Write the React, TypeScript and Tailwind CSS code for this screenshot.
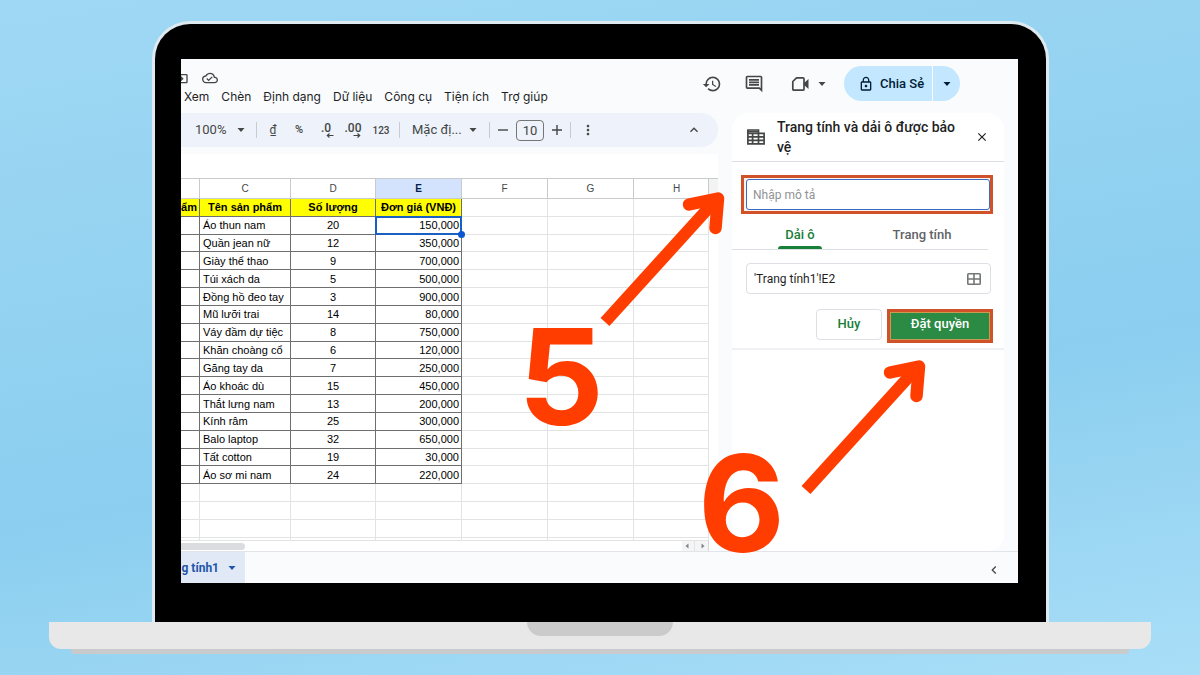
import type { ReactNode } from "react";
import {
  MdChevronLeft,
  MdClose,
  MdExpandLess,
  MdHistory,
  MdLockOutline,
  MdMoreVert,
  MdOutlineCloudDone,
  MdOutlineDriveFileMove,
  MdOutlineInsertComment,
} from "react-icons/md";

const menus = ["Xem", "Chèn", "Định dạng", "Dữ liệu", "Công cụ", "Tiện ích", "Trợ giúp"];

const products: [string, string, string][] = [
  ["Áo thun nam", "20", "150,000"],
  ["Quần jean nữ", "12", "350,000"],
  ["Giày thể thao", "9", "700,000"],
  ["Túi xách da", "5", "500,000"],
  ["Đồng hồ đeo tay", "3", "900,000"],
  ["Mũ lưỡi trai", "14", "80,000"],
  ["Váy đầm dự tiệc", "8", "750,000"],
  ["Khăn choàng cổ", "6", "120,000"],
  ["Găng tay da", "7", "250,000"],
  ["Áo khoác dù", "15", "450,000"],
  ["Thắt lưng nam", "13", "200,000"],
  ["Kính râm", "25", "300,000"],
  ["Balo laptop", "32", "650,000"],
  ["Tất cotton", "19", "30,000"],
  ["Áo sơ mi nam", "24", "220,000"],
];

const DARK = "border-r border-b border-[#6e6e6e]";
const LIGHT = "border-r border-b border-[#e2e3e3]";

function Caret() {
  return (
    <svg viewBox="0 0 8 4" className="h-1 w-2 shrink-0 fill-current" aria-hidden="true">
      <path d="M0.5 0h7L4 4z" />
    </svg>
  );
}

function Divider() {
  return <div className="mx-1 h-4 w-px shrink-0 bg-[#c7cbd1]" />;
}

function VideoIcon() {
  return (
    <svg viewBox="0 0 19 16" className="h-4 w-[19px] shrink-0" fill="none" aria-hidden="true">
      <path d="M5.5 1.8H12a1 1 0 0 1 1 1v10.4a1 1 0 0 1-1 1H2.8a1 1 0 0 1-1-1V5.5z" stroke="currentColor" strokeWidth="1.7" strokeLinejoin="round" />
      <path d="M13 7l4.5-4v10L13 9z" fill="currentColor" />
    </svg>
  );
}

function SheetsIcon() {
  return (
    <svg viewBox="0 0 18 16" className="h-4 w-[18px] shrink-0" fill="none" stroke="#444746" strokeWidth="1.7" aria-hidden="true">
      <path d="M0.9 1h10.6v3.4h5.6v10.4H0.9z" />
      <path d="M0.9 4.4h10.6M0.9 7.9h16.2M0.9 11.3h16.2M5.6 4.4v10.4M11.5 4.4v10.4" />
      <path d="M0.9 2.6h10.6" />
    </svg>
  );
}

function GridIcon() {
  return (
    <svg viewBox="0 0 14 12" className="h-3 w-3.5" fill="none" stroke="#747775" strokeWidth="1.6" aria-hidden="true">
      <rect x="0.8" y="0.8" width="12.4" height="10.4" rx="0.8" />
      <path d="M7 0.8v10.4M0.8 6h12.4" />
    </svg>
  );
}

function DecimalIcon({ label, right }: { label: string; right?: boolean }) {
  return (
    <span className="flex flex-col">
      <span className="text-xs leading-[10px] font-medium">{label}</span>
      <svg viewBox="0 0 16 5" className="h-[5px] w-4 self-end" fill="none" stroke="currentColor" strokeWidth="1.2" aria-hidden="true">
        {right ? <path d="M8.5 2.5h6M12.5 0.5l2.2 2-2.2 2" /> : <path d="M15.5 2.5h-6M11.5 0.5l-2.2 2 2.2 2" />}
      </svg>
    </span>
  );
}

function ToolButton({ label, className, children }: { label: string; className: string; children: ReactNode }) {
  return (
    <button type="button" aria-label={label} className={`flex h-6 shrink-0 items-center justify-center ${className}`}>
      {children}
    </button>
  );
}

function Arrow({ className }: { className: string }) {
  return (
    <svg viewBox="0 0 126 138" className={`pointer-events-none absolute h-[138px] w-[126px] ${className}`} fill="none" stroke="#ff3d00" aria-hidden="true">
      <path d="M5 133L114 13" strokeWidth="12" />
      <path d="M89 15.500L118 9.500 115.500 39" strokeWidth="12.5" strokeLinecap="round" strokeLinejoin="round" />
    </svg>
  );
}

function Header() {
  return (
    <header className="flex h-[54px] items-start">
      <div className="pt-[11px]">
        <div className="flex h-4 items-center gap-[13px] text-[#444746]">
          <div className="flex w-2 justify-end overflow-hidden">
            <MdOutlineDriveFileMove className="size-4 shrink-0" />
          </div>
          <MdOutlineCloudDone className="size-4" />
        </div>
        <nav className="mt-[3px] flex gap-3 pl-[3px] font-[Inter,Roboto,sans-serif] text-xs leading-4 whitespace-nowrap text-[#1f1f1f]">
          {menus.map((m) => (
            <button key={m} type="button">{m}</button>
          ))}
        </nav>
      </div>
      <div className="mt-[7px] mr-[58px] ml-auto flex h-[35px] items-center text-[#444746]">
        <button type="button" aria-label="Lịch sử"><MdHistory className="size-5" /></button>
        <button type="button" aria-label="Nhận xét" className="ml-[22px]"><MdOutlineInsertComment className="size-5" /></button>
        <button type="button" aria-label="Cuộc gọi" className="ml-[27px] flex items-center gap-2">
          <VideoIcon />
          <Caret />
        </button>
        <div className="ml-[18px] flex h-full overflow-hidden rounded-full bg-[#c2e7ff] text-[#001d35]">
          <button type="button" className="flex w-[89px] items-center gap-[6px] border-r border-[#f9fbfd] pl-[14px] text-[13px] font-medium whitespace-nowrap">
            <MdLockOutline className="size-4" />
            Chia Sẻ
          </button>
          <button type="button" aria-label="Tùy chọn chia sẻ" className="flex w-[27px] items-center justify-center"><Caret /></button>
        </div>
      </div>
    </header>
  );
}

function Toolbar() {
  return (
    <div className="flex h-[34px] items-center rounded-r-full bg-[#eef2fa] pr-2 pl-[14px] text-[#444746]">
      <ToolButton label="Thu phóng" className="">
        <span className="w-[34px] text-left text-[13px]">100%</span>
        <span className="flex w-[23px] justify-center"><Caret /></span>
      </ToolButton>
      <Divider />
      <ToolButton label="Tiền tệ" className="w-6 text-xs">₫</ToolButton>
      <ToolButton label="Phần trăm" className="w-7 text-[11px] font-medium">%</ToolButton>
      <ToolButton label="Giảm số thập phân" className="w-[26px]"><DecimalIcon label=".0" /></ToolButton>
      <ToolButton label="Tăng số thập phân" className="w-7"><DecimalIcon label=".00" right /></ToolButton>
      <ToolButton label="Định dạng số" className="w-7 text-[10px] font-medium">123</ToolButton>
      <Divider />
      <ToolButton label="Phông chữ" className="pl-2">
        <span className="w-12 text-left text-[13px] whitespace-nowrap">Mặc đị...</span>
        <span className="flex w-[25px] justify-center"><Caret /></span>
      </ToolButton>
      <Divider />
      <ToolButton label="Giảm cỡ chữ" className="w-[18px]">
        <svg viewBox="0 0 10 10" className="size-2.5" stroke="currentColor" strokeWidth="1.4" aria-hidden="true"><path d="M0 5h10" /></svg>
      </ToolButton>
      <input aria-label="Cỡ chữ" defaultValue="10" className="mx-1 h-[21px] w-7 rounded-[4px] border border-[#747775] bg-transparent text-center text-[13px]" />
      <ToolButton label="Tăng cỡ chữ" className="w-[18px]">
        <svg viewBox="0 0 10 10" className="size-2.5" stroke="currentColor" strokeWidth="1.4" aria-hidden="true"><path d="M0 5h10M5 0v10" /></svg>
      </ToolButton>
      <Divider />
      <ToolButton label="Thêm" className="w-[26px]"><MdMoreVert className="size-4" /></ToolButton>
      <div className="ml-auto">
        <ToolButton label="Thu gọn" className="w-8"><MdExpandLess className="size-4" /></ToolButton>
      </div>
    </div>
  );
}

function Sheet() {
  return (
    <div className="mt-[7px] flex flex-1 flex-col bg-white">
      <div className="h-[25px] border-b border-[#c8cacc]" />
      <div className="flex">
        <div className="min-w-0 flex-1">
          <table className="h-[362px] w-full table-fixed border-separate border-spacing-0 font-['Liberation_Sans',Arial,sans-serif] text-[11px] leading-[15px] whitespace-nowrap text-black">
            <colgroup>
              <col className="w-[19px]" />
              <col className="w-[91px]" />
              <col className="w-[85px]" />
              <col className="w-[86px]" />
              <col className="w-[86px]" />
              <col className="w-[86px]" />
              <col />
            </colgroup>
            <thead>
              <tr className="h-5 text-[10px] text-[#444746]">
                {["", "C", "D", "E", "F", "G", "H"].map((c, i) => (
                  <th
                    key={i}
                    className={
                      "h-5 border-r border-b border-[#c8cacc] p-0 align-middle " +
                      (c === "E" ? "bg-[#d3e3fd] font-bold text-[#041e49]" : "font-normal") +
                      (c === "H" ? " pl-[11px]" : "")
                    }
                  >
                    {c}
                  </th>
                ))}
              </tr>
            </thead>
            <tbody>
              <tr className="text-center font-bold">
                <td className={`bg-[#ffff00] p-0 pt-px pr-[2px] text-right ${DARK}`}>ẩm</td>
                <td className={`bg-[#ffff00] p-0 pt-px ${DARK}`}>Tên sản phẩm</td>
                <td className={`bg-[#ffff00] p-0 pt-px ${DARK}`}>Số lượng</td>
                <td className={`bg-[#ffff00] p-0 pt-px ${DARK}`}>Đơn giá (VNĐ)</td>
                <td className={`p-0 ${LIGHT}`} />
                <td className={`p-0 ${LIGHT}`} />
                <td className={`p-0 ${LIGHT}`} />
              </tr>
              {products.map(([name, amount, price], i) => (
                <tr key={name}>
                  <td className={`p-0 pt-px ${DARK}`}>&nbsp;</td>
                  <td className={`p-0 pt-px pl-[3px] ${DARK}`}>{name}</td>
                  <td className={`p-0 pt-px text-center ${DARK}`}>{amount}</td>
                  <td className={`relative p-0 pt-px pr-[2px] text-right ${DARK}`}>
                    {price}
                    {i === 0 && (
                      <>
                        <span className="absolute -inset-px border-2 border-[#1a5fc2]" />
                        <span className="absolute -right-1 -bottom-1 z-10 size-[7px] rounded-full bg-[#0b57d0]" />
                      </>
                    )}
                  </td>
                  <td className={`p-0 ${LIGHT}`} />
                  <td className={`p-0 ${LIGHT}`} />
                  <td className={`p-0 ${LIGHT}`} />
                </tr>
              ))}
              {[0, 1, 2].map((r) => (
                <tr key={r}>
                  {[0, 1, 2, 3, 4, 5, 6].map((c) => (
                    <td key={c} className={`p-0 pt-px ${LIGHT}`}>&nbsp;</td>
                  ))}
                </tr>
              ))}
              <tr className="h-[3px]">
                {[0, 1, 2, 3, 4, 5, 6].map((c) => (
                  <td key={c} className={`h-[3px] p-0 ${LIGHT}`} />
                ))}
              </tr>
            </tbody>
          </table>
        </div>
        <div className="w-[9px]">
          <div className="h-5 border-b border-[#c8cacc] bg-[#f3f3f3]" />
        </div>
      </div>
      <div className="flex h-2.5 items-center justify-between pr-[9px]">
        <div className="h-[7px] w-16 rounded-r-full bg-[#dadce0]" />
        <div className="flex h-full w-[27px] items-center justify-around border-r border-[#d5d7d9] bg-[#f5f5f5]">
          <svg viewBox="0 0 4 6" className="h-1.5 w-1 fill-[#80868b]" aria-hidden="true"><path d="M3.5 0.5v5L0.500 3z" /></svg>
          <div className="h-full w-px bg-[#e2e3e3]" />
          <svg viewBox="0 0 4 6" className="h-1.5 w-1 fill-[#80868b]" aria-hidden="true"><path d="M0.5 0.5v5l3-2.500z" /></svg>
        </div>
      </div>
    </div>
  );
}

function Panel() {
  return (
    <aside className="mx-[14px] w-[272px] shrink-0 rounded-2xl bg-white">
      <div className="flex h-[49px] items-center border-b border-[#dcdfe3] pl-[15px]">
        <SheetsIcon />
        <h2 className="ml-3 flex-1 pr-4 text-sm leading-5 font-medium text-[#1f1f1f]">Trang tính và dải ô được bảo vệ</h2>
        <button type="button" aria-label="Đóng" className="mr-[15px] text-[#1f1f1f]"><MdClose className="size-[14px]" /></button>
      </div>
      <div className="mt-[13px] mr-[11px] ml-[9px] h-[39px] border-[3px] border-[#cf5229] bg-[#fdf3ec] py-px pl-[2px]">
        <input aria-label="Mô tả" placeholder="Nhập mô tả" className="h-full w-full rounded-[3px] border border-[#3b6cc0] bg-white pl-[6px] text-xs text-[#1f1f1f] placeholder:text-[#8f9296]" />
      </div>
      <div className="mt-[7px] mr-4 flex h-[29px] border-b border-[#dcdfe3] pr-[5px] pl-[7px] text-[13px] leading-4 font-medium">
        <button type="button" className="flex flex-1 flex-col items-center justify-between pt-[6px] text-[#188038]">
          Dải ô
          <span className="h-[3px] w-11 rounded-t-[3px] bg-[#188038]" />
        </button>
        <button type="button" className="flex flex-1 justify-center pt-[6px] text-[#5f6368]">Trang tính</button>
      </div>
      <div className="mt-[13px] mr-[13px] ml-[14px] flex h-[31px] items-center rounded-[4px] border border-[#dcdfe3] pr-[9px]">
        <input aria-label="Dải ô" defaultValue="'Trang tính1'!E2" className="min-w-0 flex-1 pl-[7px] text-xs text-[#1f1f1f]" />
        <button type="button" aria-label="Chọn dải ô"><GridIcon /></button>
      </div>
      <div className="mt-[15px] mr-[11px] flex items-start justify-end gap-[5px] text-[13px] font-medium">
        <button type="button" className="h-[31px] w-[66px] rounded-[4px] border border-[#dcdfe3] pb-px text-[#188038]">Hủy</button>
        <button type="button" className="h-[34px] w-[106px] border-[3px] border-[#cf5229] bg-[#2b8a44] pb-1 text-white inset-ring inset-ring-[#c99a52]">Đặt quyền</button>
      </div>
      <div className="mt-[5px] h-[2px] bg-[#eff1f4]" />
    </aside>
  );
}

export default function App() {
  return (
    <main className="flex min-h-screen flex-col bg-linear-170 from-[#9fd8f4] via-[#8bceef] via-60% to-[#a9def7] pt-[21px] font-[Roboto,'Noto_Sans',sans-serif]">
      <div className="mr-[151px] ml-[152px] rounded-t-[38px] border-x-[3px] border-t-[3px] border-[#dfeaf0] bg-black pt-[35px] pr-7 pb-[39px] pl-[26px]">
        <div className="relative overflow-hidden bg-[#f9fbfd]">
          <Header />
          <div className="flex">
            <div className="flex min-w-0 flex-1 flex-col">
              <Toolbar />
              <Sheet />
            </div>
            <Panel />
          </div>
          <footer className="flex h-8 items-center justify-between border-t border-[#e1e4e8]">
            <button type="button" className="flex h-full w-16 items-center justify-end gap-[9px] bg-[#e1e9f7] pr-[9px] text-xs font-bold whitespace-nowrap text-[#1f56a8]">
              g tính1
              <Caret />
            </button>
            <button type="button" aria-label="Hiện bảng bên" className="mt-1 mr-4 text-[#444746]"><MdChevronLeft className="size-4" /></button>
          </footer>
          <Arrow className="top-[130px] right-[292px]" />
          <Arrow className="top-[298px] right-[91px]" />
          <span className="pointer-events-none absolute top-[247px] right-[414px] font-[Inter,Arial,sans-serif] text-[134px] leading-[140px] font-bold text-[#ff3d00]">5</span>
          <span className="pointer-events-none absolute top-[374px] right-[233px] font-[Inter,Arial,sans-serif] text-[134px] leading-[140px] font-bold text-[#ff3d00]">6</span>
        </div>
      </div>
      <div className="mx-[49px] flex h-[27px] justify-center rounded-b-xl bg-[#e8e8e8]">
        <div className="h-[14px] w-[146px] rounded-b-[14px] bg-[#cbcbcb]" />
      </div>
      <div className="mx-[71px] h-[5px] rounded-b-[4px] bg-[#c8cacc]" />
    </main>
  );
}
